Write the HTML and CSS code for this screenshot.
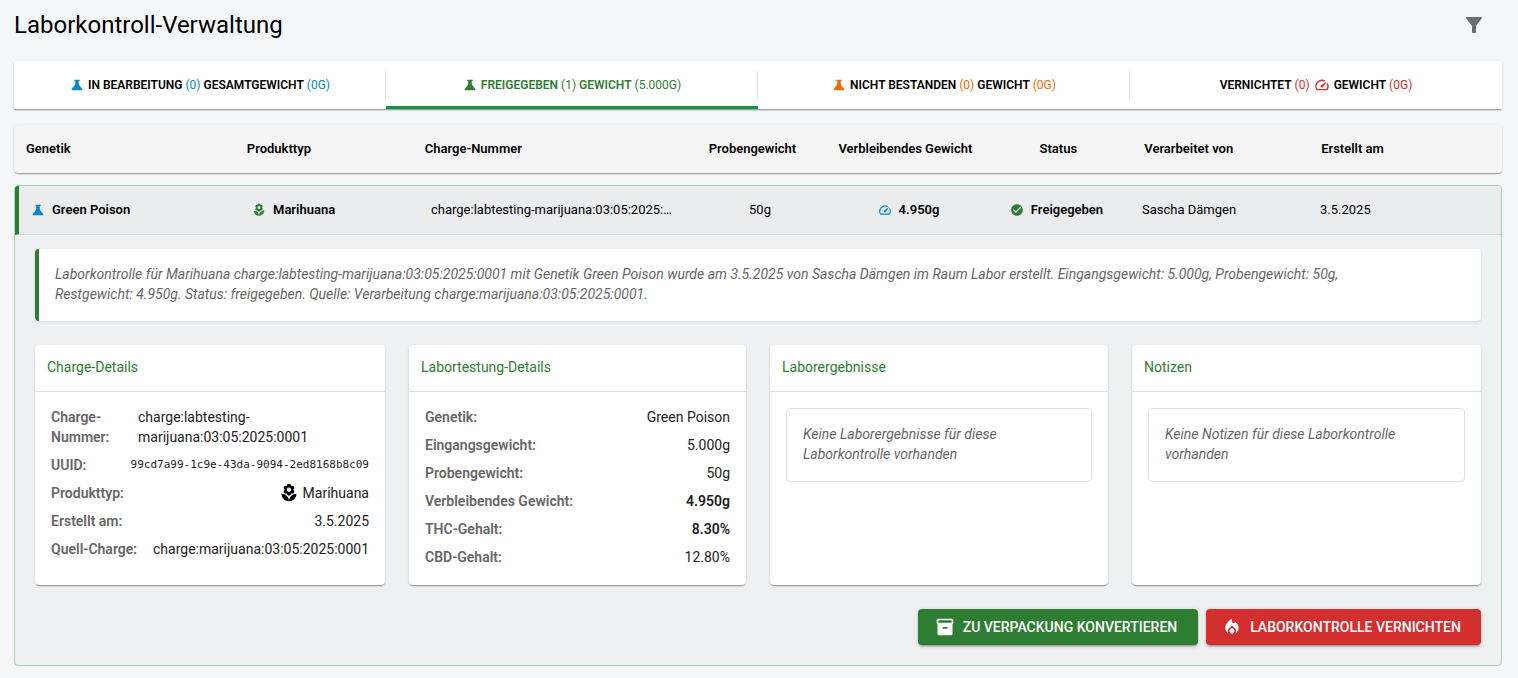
FILE: index.html
```html
<!DOCTYPE html>
<html lang="de">
<head>
<meta charset="utf-8">
<title>Laborkontroll-Verwaltung</title>
<meta name="viewport" content="width=device-width, initial-scale=1">
<link rel="stylesheet" href="styles.css">
</head>
<body>
<svg class="sprite" aria-hidden="true">
  <symbol id="flask" viewBox="0 0 24 24"><path d="M7.500 3h9v2H15v4.500c0 1.500.6 2.500 1.600 3.700L20 17.500c.9 1 1.300 1.800 1.300 3.500H2.700c0-1.700.4-2.500 1.300-3.500l3.400-4.300C8.400 12 9 11 9 9.500V5H7.500z"/></symbol>
  <symbol id="speed" viewBox="0 0 24 24"><path d="m20.38 8.57-1.23 1.85a8 8 0 0 1-.22 7.58H5.07A8 8 0 0 1 15.58 6.85l1.85-1.23A10 10 0 0 0 3.35 19a2 2 0 0 0 1.72 1h13.85a2 2 0 0 0 1.74-1 10 10 0 0 0-.27-10.44zm-9.79 6.84a2 2 0 0 0 2.83 0l5.66-8.49-8.49 5.66a2 2 0 0 0 0 2.83"/></symbol>
  <symbol id="flower" viewBox="0 0 24 24"><path d="M12 22c4.97 0 9-4.03 9-9-4.97 0-9 4.03-9 9M5.6 10.25c0 1.38 1.12 2.5 2.5 2.5.53 0 1.01-.16 1.42-.44l-.02.19c0 1.38 1.12 2.5 2.5 2.5s2.5-1.12 2.5-2.5l-.02-.19c.4.28.89.44 1.42.44 1.38 0 2.5-1.12 2.5-2.5 0-1-.59-1.85-1.43-2.25.84-.4 1.43-1.25 1.43-2.25 0-1.38-1.12-2.5-2.5-2.5-.53 0-1.01.16-1.42.44l.02-.19C14.5 2.12 13.38 1 12 1S9.5 2.12 9.5 3.5l.02.19c-.4-.28-.89-.44-1.42-.44-1.38 0-2.5 1.12-2.5 2.5 0 1 .59 1.85 1.43 2.25-.84.4-1.43 1.25-1.43 2.25M12 5.5c1.38 0 2.5 1.12 2.5 2.5s-1.12 2.5-2.5 2.5S9.5 9.38 9.5 8s1.12-2.5 2.5-2.5M3 13c0 4.97 4.03 9 9 9 0-4.97-4.03-9-9-9"/></symbol>
  <symbol id="check" viewBox="0 0 24 24"><path d="M12 2C6.48 2 2 6.48 2 12s4.48 10 10 10 10-4.48 10-10S17.52 2 12 2m-2 15-5-5 1.41-1.41L10 14.17l7.59-7.59L19 8z"/></symbol>
  <symbol id="box" viewBox="0 0 24 24"><path d="M20 2H4c-1 0-2 .9-2 2v3.01c0 .72.43 1.34 1 1.69V20c0 1.1 1.1 2 2 2h14c.9 0 2-.9 2-2V8.7c.57-.35 1-.97 1-1.69V4c0-1.1-1-2-2-2m-5 12H9v-2h6zm5-7H4V4h16z"/></symbol>
  <symbol id="fire" viewBox="0 0 24 24"><path d="m16 6-.44.55C14.38 8.02 12 7.19 12 5.3V2S4 6 4 13c0 2.92 1.56 5.47 3.89 6.86-.56-.79-.89-1.76-.89-2.8 0-1.32.52-2.56 1.47-3.5L12 10.1l3.53 3.47c.95.93 1.47 2.17 1.47 3.5 0 1.02-.31 1.96-.85 2.75 1.89-1.15 3.29-3.06 3.71-5.3.66-3.55-1.07-6.9-3.86-8.52zM12 12.9l-2.13 2.09c-.56.56-.87 1.29-.87 2.07C9 18.68 10.35 20 12 20s3-1.32 3-2.94c0-.78-.31-1.52-.87-2.07z"/></symbol>
  <symbol id="filter" viewBox="0 0 24 24"><path d="M4.25 5.61C6.27 8.2 10 13 10 13v6c0 .55.45 1 1 1h2c.55 0 1-.45 1-1v-6s3.72-4.8 5.74-7.39c.51-.66.04-1.61-.79-1.61H5.04c-.83 0-1.3.95-.79 1.61"/></symbol>
</svg>

<main class="page">
  <header class="page-header">
    <h1 class="title">Laborkontroll-Verwaltung</h1>
    <button class="filter" type="button" aria-label="Filter"><svg class="icon-24"><use href="#filter"/></svg></button>
  </header>

  <div class="tabs" role="tablist">
    <button class="tab" type="button" role="tab"><svg class="icon-14 blue"><use href="#flask"/></svg><span><b>In Bearbeitung</b> <span class="blue">(0)</span> <b>Gesamtgewicht</b> <span class="blue">(0g)</span></span></button>
    <button class="tab tab-active" type="button" role="tab" aria-selected="true"><svg class="icon-14"><use href="#flask"/></svg><span><b>Freigegeben</b> (1) <b>Gewicht</b> (5.000g)</span></button>
    <button class="tab" type="button" role="tab"><svg class="icon-14 orange"><use href="#flask"/></svg><span><b>Nicht bestanden</b> <span class="orange">(0)</span> <b>Gewicht</b> <span class="orange">(0g)</span></span></button>
    <button class="tab" type="button" role="tab"><span><b>Vernichtet</b> <span class="red">(0)</span></span><svg class="icon-16 red"><use href="#speed"/></svg><span><b>Gewicht</b> <span class="red">(0g)</span></span></button>
  </div>

  <table class="table">
    <thead class="table-head">
      <tr class="head-row">
        <th>Genetik</th><th>Produkttyp</th><th>Charge-Nummer</th><th class="center">Probengewicht</th><th class="center">Verbleibendes Gewicht</th><th class="center">Status</th><th>Verarbeitet von</th><th>Erstellt am</th>
      </tr>
    </thead>
    <tbody class="entry">
      <tr class="entry-row">
        <td class="with-icon"><svg class="icon-14 blue"><use href="#flask"/></svg><b>Green Poison</b></td>
        <td class="with-icon"><svg class="icon-14 green"><use href="#flower"/></svg><b>Marihuana</b></td>
        <td class="ellipsis">charge:labtesting-marijuana:03:05:2025:0001</td>
        <td class="center">50g</td>
        <td class="with-icon middle"><svg class="icon-14 blue"><use href="#speed"/></svg><b>4.950g</b></td>
        <td class="with-icon middle"><svg class="icon-14 green"><use href="#check"/></svg><b>Freigegeben</b></td>
        <td>Sascha Dämgen</td>
        <td>3.5.2025</td>
      </tr>
      <tr class="details-row">
        <td class="details" colspan="8">
          <p class="summary">Laborkontrolle für Marihuana charge:labtesting-marijuana:03:05:2025:0001 mit Genetik Green Poison wurde am 3.5.2025 von Sascha Dämgen im Raum Labor erstellt. Eingangsgewicht: 5.000g, Probengewicht: 50g, Restgewicht: 4.950g. Status: freigegeben. Quelle: Verarbeitung charge:marijuana:03:05:2025:0001.</p>
          <div class="cards">
            <section class="card">
              <h2 class="card-title">Charge-Details</h2>
              <dl class="facts">
                <div class="fact"><dt class="narrow">Charge-Nummer:</dt><dd class="wrap">charge:labtesting-marijuana:03:05:2025:0001</dd></div>
                <div class="fact"><dt>UUID:</dt><dd class="mono">99cd7a99-1c9e-43da-9094-2ed8168b8c09</dd></div>
                <div class="fact"><dt>Produkttyp:</dt><dd class="product"><svg class="icon-20"><use href="#flower"/></svg>Marihuana</dd></div>
                <div class="fact"><dt>Erstellt am:</dt><dd>3.5.2025</dd></div>
                <div class="fact"><dt>Quell-Charge:</dt><dd>charge:marijuana:03:05:2025:0001</dd></div>
              </dl>
            </section>
            <section class="card">
              <h2 class="card-title">Labortestung-Details</h2>
              <dl class="facts">
                <div class="fact"><dt>Genetik:</dt><dd>Green Poison</dd></div>
                <div class="fact"><dt>Eingangsgewicht:</dt><dd>5.000g</dd></div>
                <div class="fact"><dt>Probengewicht:</dt><dd>50g</dd></div>
                <div class="fact"><dt>Verbleibendes Gewicht:</dt><dd><b>4.950g</b></dd></div>
                <div class="fact"><dt>THC-Gehalt:</dt><dd><b>8.30%</b></dd></div>
                <div class="fact"><dt>CBD-Gehalt:</dt><dd>12.80%</dd></div>
              </dl>
            </section>
            <section class="card">
              <h2 class="card-title">Laborergebnisse</h2>
              <p class="empty">Keine Laborergebnisse für diese Laborkontrolle vorhanden</p>
            </section>
            <section class="card">
              <h2 class="card-title">Notizen</h2>
              <p class="empty">Keine Notizen für diese Laborkontrolle vorhanden</p>
            </section>
          </div>
          <div class="actions">
            <button class="action action-convert" type="button"><svg class="icon-20"><use href="#box"/></svg>Zu Verpackung konvertieren</button>
            <button class="action action-destroy" type="button"><svg class="icon-20"><use href="#fire"/></svg>Laborkontrolle vernichten</button>
          </div>
        </td>
      </tr>
    </tbody>
  </table>
</main>
</body>
</html>
```
FILE: styles.css
```css
:root {
  --green: #2e7d32;
  --blue: #0288d1;
  --orange: #ef6c00;
  --red: #d32f2f;
  --muted: #666;
  --line: #e0e0e0;
  --shadow: 0 2px 1px -1px rgba(0, 0, 0, 0.2), 0 1px 1px rgba(0, 0, 0, 0.14), 0 1px 3px rgba(0, 0, 0, 0.12);
}

* { box-sizing: border-box; }

body {
  margin: 0;
  background: #f5f6f8;
  color: #000;
  font: 13px/20px Roboto, "Liberation Sans", sans-serif;
}

h1, h2, p, dl, dd { margin: 0; }
button { font: inherit; border: 0; cursor: pointer; }
b { font-weight: 600; }
svg { fill: currentColor; flex: none; }

.sprite { display: none; }
.icon-14 { width: 14px; height: 14px; }
.icon-16 { width: 16px; height: 16px; }
.icon-20 { width: 20px; height: 20px; }
.icon-24 { width: 24px; height: 24px; }
.blue { color: var(--blue); }
.green { color: var(--green); }
.orange { color: var(--orange); }
.red { color: var(--red); }

.page { padding: 5px 16px 12px 14px; }

.page-header {
  display: flex;
  align-items: center;
  justify-content: space-between;
  padding-right: 8px;
}
.title { font-size: 24px; line-height: 32px; font-weight: 400; }
.filter {
  display: flex;
  padding: 8px;
  background: none;
  color: #6b6c6d;
}

/* Status tabs */
.tabs {
  display: grid;
  grid-template-columns: repeat(4, 1fr);
  margin-top: 16px;
  background: #fff;
  box-shadow: var(--shadow);
}
.tab {
  position: relative;
  display: flex;
  align-items: center;
  justify-content: center;
  gap: 4px;
  height: 48px;
  padding: 0;
  background: none;
  color: #000;
  font-size: 12px;
  text-transform: uppercase;
}
.tab + .tab::before {
  content: "";
  position: absolute;
  left: -1px;
  top: 10px;
  bottom: 10px;
  width: 1px;
  background: var(--line);
}
.tab-active { color: var(--green); box-shadow: inset 0 -3px #0f9347; }

/* Table */
.table, .table-head, .entry, .details-row, .details { display: block; }
.table th, .table td { padding: 0 12px; text-align: left; }
.table .center { text-align: center; }
.table-head {
  margin-top: 16px;
  border-radius: 4px;
  background: #f5f5f5;
  box-shadow: var(--shadow);
}
.head-row, .entry-row { display: grid; align-items: center; height: 48px; }
.head-row { grid-template-columns: 221fr 178fr 266fr 148fr 157fr 148fr 177fr 193fr; }
.head-row th { font-weight: 600; white-space: nowrap; }

.entry {
  margin-top: 12px;
  border: 1px solid #a5d6a7;
  border-radius: 4px;
  background: #eff0f2;
}
.entry-row {
  grid-template-columns: 221fr 179fr 267fr 148fr 149fr 147fr 178fr 193fr;
  height: 49px;
  border-left: 4px solid var(--green);
  border-bottom: 1px solid #d6d7d9;
  border-top-left-radius: 3px;
  border-top-right-radius: 3px;
  background: #ebeced;
}
.with-icon { display: flex; align-items: center; gap: 7px; }
.middle { justify-content: center; }
.ellipsis { overflow: hidden; text-overflow: ellipsis; white-space: nowrap; }

/* Expanded entry */
.table .details { padding: 14px 20px 20px; font-size: 14px; }
.summary {
  padding: 15px 72px 17px 16px;
  border-left: 4px solid var(--green);
  border-radius: 4px;
  background: #fff;
  box-shadow: 0 1px 3px rgba(0, 0, 0, 0.1);
  color: var(--muted);
  font-style: italic;
}
.cards {
  display: grid;
  grid-template-columns: 350fr 337fr 338fr 349fr;
  gap: 24px;
  margin-top: 24px;
}
.card {
  min-height: 240px;
  border-radius: 4px;
  background: #fff;
  box-shadow: var(--shadow);
}
.card-title {
  padding: 12px 12px 14px;
  border-bottom: 1px solid var(--line);
  color: var(--green);
  font-size: 14px;
  font-weight: 400;
}
.facts { display: grid; gap: 8px; padding: 15px 16px 17px; color: #212121; }
.fact { display: flex; justify-content: space-between; gap: 12px; }
.fact dt { color: var(--muted); font-weight: 600; white-space: nowrap; }
.fact .narrow { flex: 0 0 75px; white-space: normal; }
.fact dd { text-align: right; }
.fact .wrap { flex: 1; text-align: left; }
.fact .mono { font-family: "DejaVu Sans Mono", monospace; font-size: 11px; white-space: nowrap; }
.product { display: flex; align-items: center; gap: 4px; }
.product svg { color: #000; }
.empty {
  margin: 16px;
  padding: 15px 16px 17px;
  border: 1px solid var(--line);
  border-radius: 4px;
  color: var(--muted);
  font-style: italic;
}

.actions { display: flex; justify-content: flex-end; gap: 8px; margin-top: 24px; }
.action {
  display: flex;
  align-items: center;
  justify-content: center;
  gap: 8px;
  height: 36px;
  padding: 0 16px 0 12px;
  border-radius: 4px;
  box-shadow: 0 3px 1px -2px rgba(0, 0, 0, 0.2), 0 2px 2px rgba(0, 0, 0, 0.14), 0 1px 5px rgba(0, 0, 0, 0.12);
  color: #fff;
  font-weight: 500;
  text-transform: uppercase;
}
.action-convert { min-width: 280px; background: var(--green); }
.action-destroy { min-width: 275px; background: var(--red); }
```
